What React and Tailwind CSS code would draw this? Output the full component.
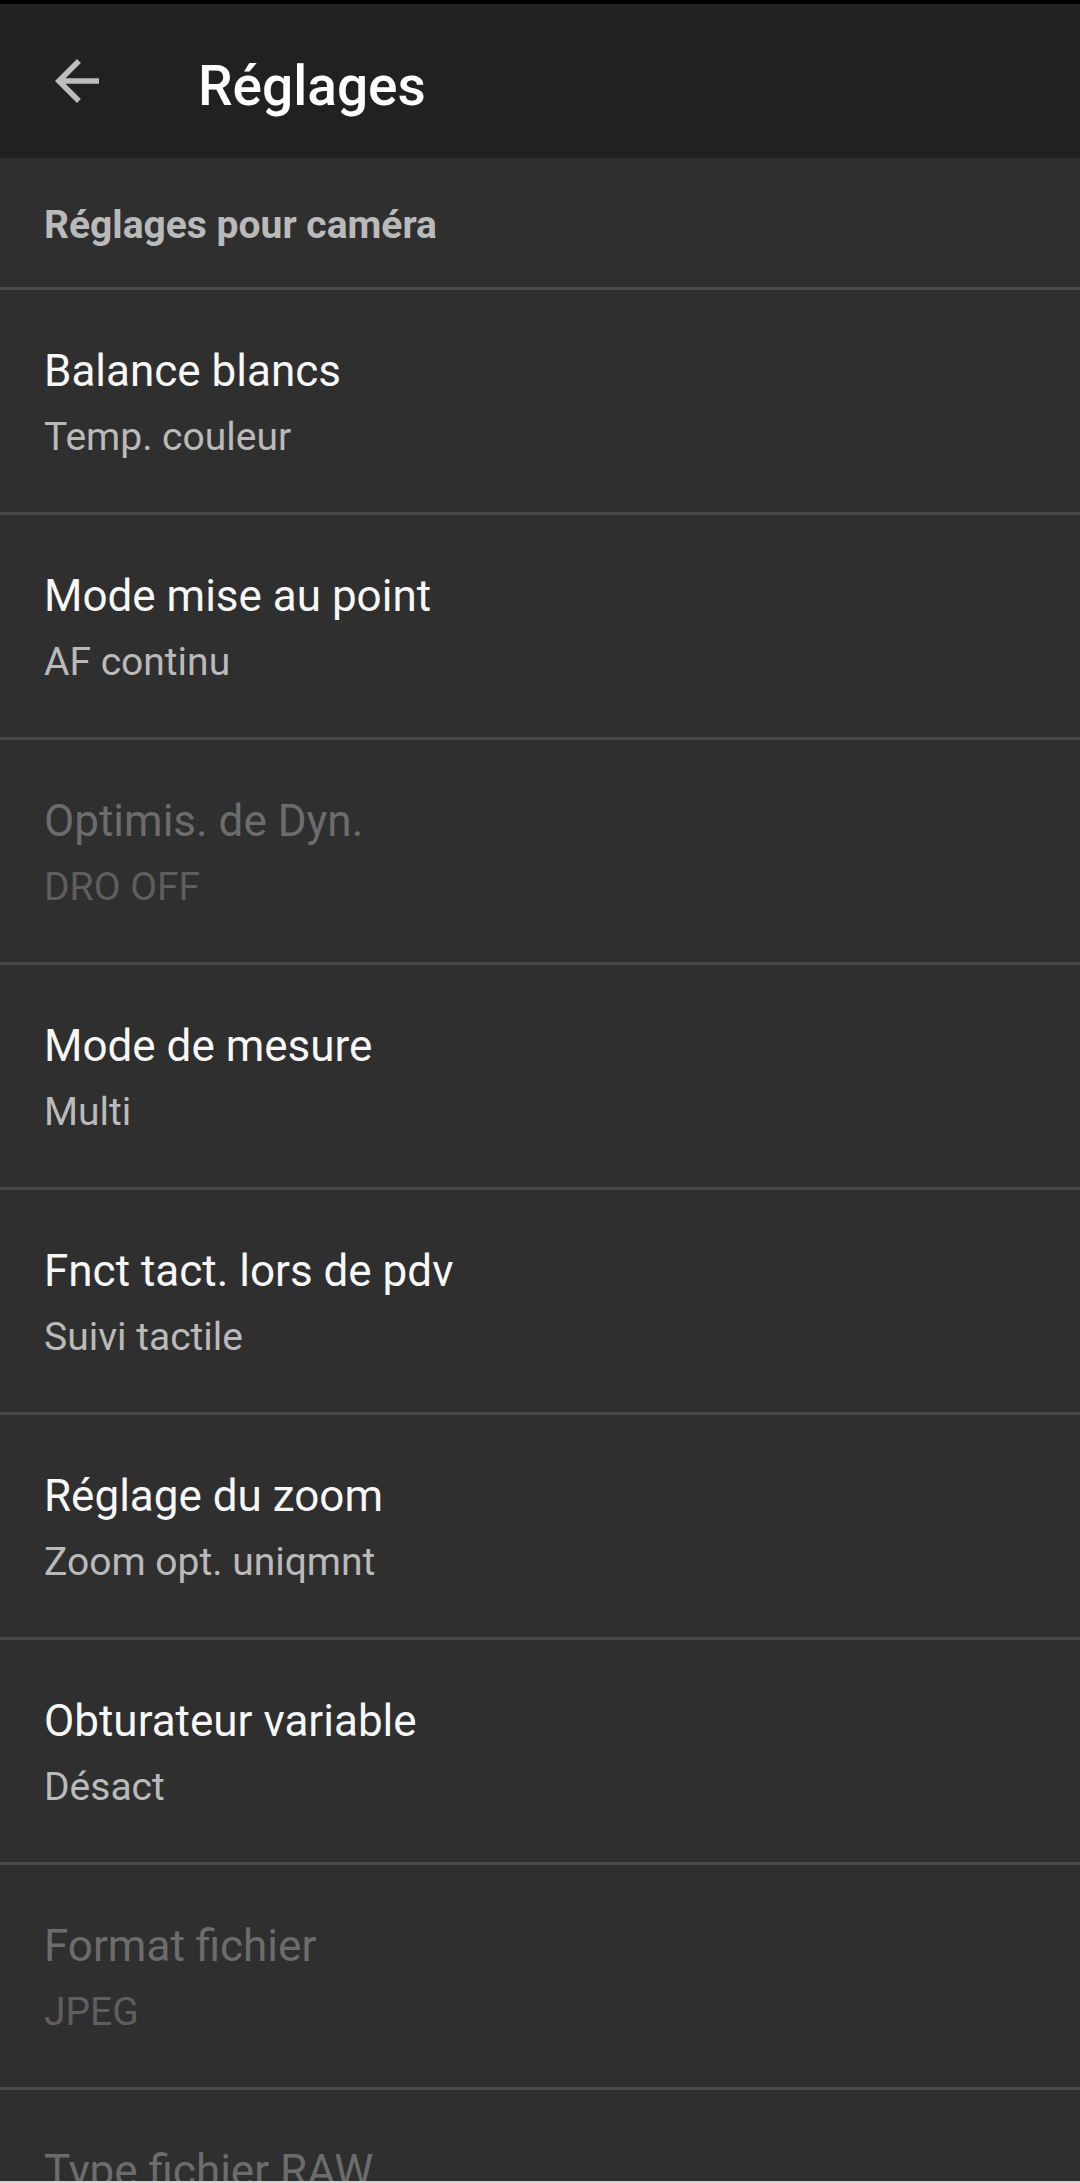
import React from 'react';

const items = [
  { title: 'Balance blancs', value: 'Temp. couleur' },
  { title: 'Mode mise au point', value: 'AF continu' },
  { title: 'Optimis. de Dyn.', value: 'DRO OFF', disabled: true },
  { title: 'Mode de mesure', value: 'Multi' },
  { title: 'Fnct tact. lors de pdv', value: 'Suivi tactile' },
  { title: 'Réglage du zoom', value: 'Zoom opt. uniqmnt' },
  { title: 'Obturateur variable', value: 'Désact' },
  { title: 'Format fichier', value: 'JPEG', disabled: true },
  { title: 'Type fichier RAW', disabled: true },
];

const SettingRow = ({ title, value, disabled }) => (
  <div className="h-[225px] shrink-0 pl-[44px] pt-[55px] border-b-[3px] border-[#494949]">
    <div className={`text-[44px] leading-[52px] ${disabled ? 'text-[#6c6c6c]' : 'text-[#f7f7f7]'}`}>{title}</div>
    {value && (
      <div className={`mt-[14px] text-[39px] leading-[52px] ${disabled ? 'text-[#5e5e5e]' : 'text-[#bababa]'}`}>{value}</div>
    )}
  </div>
);

export default function App() {
  return (
    <div className="h-[2183px] w-[1080px] overflow-hidden flex flex-col bg-[#2f2f2f] font-['Roboto','Noto_Sans',sans-serif]">
      <div className="h-[4px] shrink-0 bg-black" />
      <header className="h-[154px] shrink-0 flex items-start bg-[#212121]">
        <svg className="ml-[44px] mt-[44px] w-[66px] h-[66px] shrink-0" viewBox="0 0 24 24" fill="#bdbdbd">
          <path d="M20 11H7.83l5.59-5.59L12 4l-8 8 8 8 1.41-1.41L7.83 13H20v-2z" />
        </svg>
        <h1 className="ml-[88px] mt-[50px] text-[55px] leading-[64px] font-medium text-white">Réglages</h1>
      </header>
      <div className="flex-1 overflow-hidden flex flex-col">
        <div className="h-[132px] shrink-0 pl-[44px] pt-[44px] border-b-[3px] border-[#494949]">
          <div className="text-[39px] leading-[46px] font-bold text-[#bababa]">Réglages pour caméra</div>
        </div>
        {items.map((item) => (
          <SettingRow key={item.title} {...item} />
        ))}
      </div>
      <div className="h-[2px] shrink-0 bg-[#d4d4d4]" />
    </div>
  );
}
